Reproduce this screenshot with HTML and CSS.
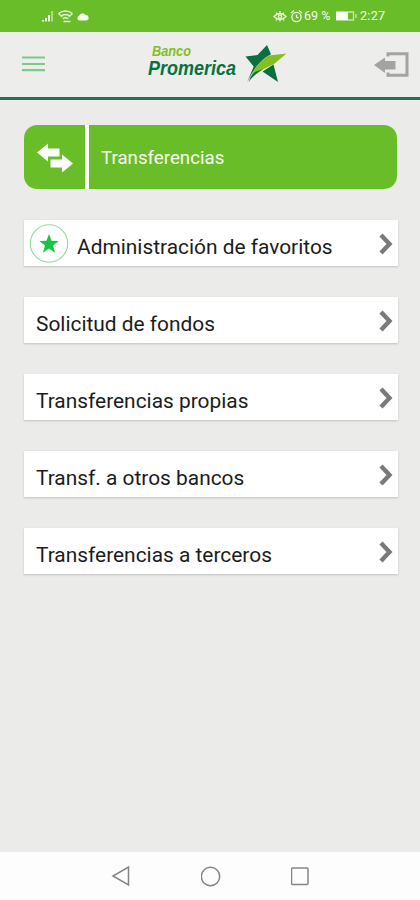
FILE: index.html
```html
<!DOCTYPE html>
<html lang="es">
<head>
    <meta charset="UTF-8">
    <meta name="viewport" content="width=device-width, initial-scale=1.0">
    <title>Transferencias</title>
    <link rel="stylesheet" href="styles.css">
</head>
<body>
    <div class="status-bar">
        <svg class="status-left" width="50" height="14" viewBox="0 0 50 14">
            <path d="M1 12.500h2v-1.500H1zM4 12.500h2V9H4zM7 12.500h2V6H7z" fill="#f2fbe9"/>
            <path d="M10 12.500h2V2h-2z" fill="#a9dc87"/>
            <path d="M17.500 4.500q7-5 14 0M19.500 7.300q5-3.500 10 0M22 9.800q2.500-2 5 0M17.500 4.500l4 3.500M31.500 4.500l-4 3.500" fill="none" stroke="#e3f5d5" stroke-width="1.400"/>
            <path d="M22.500 12.500h7" stroke="#e3f5d5" stroke-width="1.500"/>
            <path d="M38 11.500a2.400 2.400 0 0 1 0-4.500 3.600 3.600 0 0 1 6.500-1 2.800 2.800 0 0 1 1 5.500z" fill="#f4fcee"/>
        </svg>
        <div class="status-right">
            <svg width="30" height="14" viewBox="0 0 30 14" fill="none" stroke="#effae6" stroke-width="1.300">
                <path d="M1 7.500q6-6 12 0-6 6-12 0zM7 2v2.500M3 3.500l1 1.500M11 3.500l-1 1.500M7 11v1.500M3 11.500l1-1.500M11 11.500l-1-1.500"/>
                <circle cx="7" cy="7.500" r="1.600"/>
                <circle cx="23.500" cy="8" r="4.600"/>
                <path d="M23.500 5.500V8l2 1M18 4l3-2.500M29 4l-3-2.500"/>
            </svg>
            <span class="battery-level">69 %</span>
            <svg width="23" height="12" viewBox="0 0 23 12">
                <path d="M1 1.500h12v9H1z" fill="#f6fdf1"/>
                <path d="M13 2h5.500v8H13M21 4v4" fill="none" stroke="#c5e8ac" stroke-width="1.300"/>
            </svg>
            <span class="time">2:27</span>
        </div>
    </div>

    <header class="header">
        <svg class="menu" width="24" height="18" viewBox="0 0 24 18">
            <path d="M0 2.500h23M0 9h23M0 15.200h23" stroke="#7bca8d" stroke-width="2.200"/>
        </svg>
        <svg class="logo" width="142" height="42" viewBox="0 0 142 42">
            <text class="logo-top" x="6" y="14" textLength="39" lengthAdjust="spacingAndGlyphs">Banco</text>
            <text class="logo-name" x="2" y="32.500" textLength="88" lengthAdjust="spacingAndGlyphs">Promerica</text>
            <path d="M121 3l4 9.200-5 3q-11 8-19 25.300l6.700-16-8.200-10 12-1.500zM127.500 22.500l4.500 17.500-15.500-10.500z" fill="#08713f"/>
            <path d="M123 13.500l17.500-2-12.500 10.500q-14 6-24 14.500 7-16.500 19-23z" fill="#84bf20"/>
            <path d="M117 27q-9 5.500-14.500 13 3-8 6.500-10z" fill="#08713f"/>
        </svg>
        <svg class="exit" width="36" height="28" viewBox="0 0 36 28">
            <path d="M14 5.500V2.800h19v21.400H14v-2.700" fill="none" stroke="#a3a4a2" stroke-width="3"/>
            <path d="M0 14L11 6.500V10h10.500v8.500H11v3.500z" fill="#a3a4a2"/>
        </svg>
    </header>

    <main class="content">
        <div class="banner">
            <div class="banner-icon">
                <svg width="38" height="32" viewBox="0 0 38 32">
                    <path d="M1 10.500L12 1.500v5h11.500v8H12v5zM37 21.500l-11 9v-5H14.500v-8H26v-5z" fill="#fff"/>
                </svg>
            </div>
            <div class="banner-title">Transferencias</div>
        </div>

        <ul class="options">
            <li class="option favorite">
                <svg class="star" width="40" height="40" viewBox="0 0 40 40">
                    <circle cx="20" cy="19.500" r="18.700" fill="#fff" stroke="#8bdc9e" stroke-width="1.100"/>
                    <path d="M20 10l2.500 6.700 7.300.3-5.800 4.600 2 7.100-6-4.100-6 4.100 2-7.100-5.800-4.600 7.300-.3z" fill="#16c441"/>
                </svg>
                <span class="label">Administración de favoritos</span>
                <svg class="arrow" width="14" height="22" viewBox="0 0 14 22"><path d="M2 2l8.500 9L2 20"/></svg>
            </li>
            <li class="option">
                <span class="label">Solicitud de fondos</span>
                <svg class="arrow" width="14" height="22" viewBox="0 0 14 22"><path d="M2 2l8.500 9L2 20"/></svg>
            </li>
            <li class="option">
                <span class="label">Transferencias propias</span>
                <svg class="arrow" width="14" height="22" viewBox="0 0 14 22"><path d="M2 2l8.500 9L2 20"/></svg>
            </li>
            <li class="option">
                <span class="label">Transf. a otros bancos</span>
                <svg class="arrow" width="14" height="22" viewBox="0 0 14 22"><path d="M2 2l8.500 9L2 20"/></svg>
            </li>
            <li class="option">
                <span class="label">Transferencias a terceros</span>
                <svg class="arrow" width="14" height="22" viewBox="0 0 14 22"><path d="M2 2l8.500 9L2 20"/></svg>
            </li>
        </ul>
    </main>

    <nav class="nav-bar">
        <svg width="20" height="22" viewBox="0 0 20 22"><path d="M17.500 2v18L2 11z"/></svg>
        <svg width="20" height="22" viewBox="0 0 20 22"><circle cx="9.500" cy="11.500" r="9.200"/></svg>
        <svg width="20" height="22" viewBox="0 0 20 22"><rect x="0.500" y="3" width="16.500" height="16.500" rx="1"/></svg>
    </nav>
</body>
</html>
```

FILE: styles.css
```css
* {
    box-sizing: border-box;
}
body {
    margin: 0;
    height: 900px;
    display: flex;
    flex-direction: column;
    background: #ebebea;
    font-family: Roboto, "Liberation Sans", sans-serif;
}
svg {
    display: block;
    flex: none;
}
.status-bar {
    display: flex;
    justify-content: space-between;
    height: 32px;
    padding: 9px 34px 0 41px;
    background: #69bd28;
    color: #f4fcee;
}
.status-right {
    display: flex;
    height: 14px;
    align-items: center;
    font-size: 12.5px;
    line-height: 14px;
}
.battery-level {
    width: 31px;
    margin-left: 1px;
    white-space: nowrap;
}
.time {
    width: 26px;
    margin-left: 2px;
    letter-spacing: 0.3px;
}
.header {
    display: flex;
    align-items: flex-start;
    height: 68px;
    padding: 10px 10px 0 22px;
    background: #ededec;
    border-bottom: 3px solid #2b6c57;
}
.menu {
    margin-top: 13px;
}
.logo {
    margin-left: 100px;
}
.logo-top {
    font: italic bold 14px "Liberation Sans Narrow", "Liberation Sans", sans-serif;
    fill: #84bf20;
}
.logo-name {
    font: italic bold 20px "Liberation Sans Narrow", "Liberation Sans", sans-serif;
    fill: #08713f;
}
.exit {
    margin: 9px 0 0 auto;
}
.content {
    flex: 1;
    padding: 25px 22px 0 24px;
}
.banner {
    display: flex;
    gap: 4px;
    width: 373px;
    height: 64px;
    background: #fff;
    border-radius: 13px;
    overflow: hidden;
}
.banner-icon {
    width: 61px;
    padding: 17px 0 0 12px;
    background: #69bd28;
}
.banner-title {
    flex: 1;
    padding-left: 12px;
    background: #69bd28;
    color: #f7fdf2;
    font-size: 18.7px;
    line-height: 66px;
}
.options {
    display: flex;
    flex-direction: column;
    gap: 31px;
    margin: 31px 0 0;
    padding: 0;
    list-style: none;
}
.option {
    display: flex;
    align-items: flex-start;
    height: 46px;
    padding: 0 5px 0 12px;
    background: #fff;
    box-shadow: 0 1px 2px rgba(0, 0, 0, 0.18);
}
.favorite {
    padding-left: 5px;
}
.star {
    margin: 4px 8px 0 0;
}
.label {
    color: #1c1c1c;
    font-size: 20.9px;
    line-height: 54px;
}
.arrow {
    margin: 13px 0 0 auto;
    fill: none;
    stroke: #7a7a7a;
    stroke-width: 4.4;
}
.nav-bar {
    display: flex;
    gap: 70px;
    height: 48px;
    padding: 13px 0 0 111px;
    background: #fdfdfd;
    fill: none;
    stroke: #858585;
    stroke-width: 1.5;
}
```
